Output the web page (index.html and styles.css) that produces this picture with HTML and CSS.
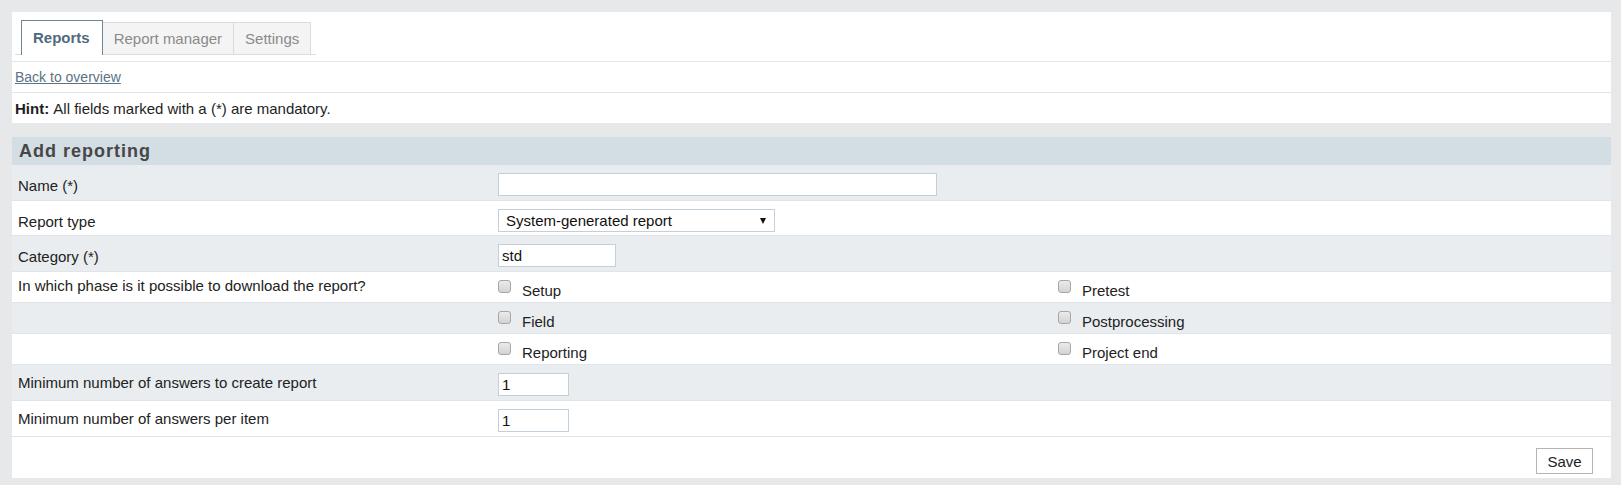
FILE: index.html
```html
<!DOCTYPE html>
<html lang="en">
<head>
<meta charset="utf-8">
<title>Add reporting</title>
<link rel="stylesheet" href="styles.css">
</head>
<body>
<div class="page">
  <section class="panel panel-top">
    <div class="tabbar">
      <ul class="tabs">
        <li class="tab tab-active">Reports</li>
        <li class="tab">Report manager</li>
        <li class="tab">Settings</li>
      </ul>
    </div>
    <div class="info-row info-row-sep"><a href="#" class="back-link">Back to overview</a></div>
    <div class="info-row hint"><b>Hint:</b>&nbsp;All fields marked with a (*) are mandatory.</div>
  </section>

  <section class="panel panel-form">
    <h2 class="form-title">Add reporting</h2>

    <div class="form-row row-gray h36">
      <div class="cell cell-label">Name (*)</div>
      <div class="cell"><input class="field field-name" type="text"></div>
      <div class="cell"></div>
    </div>

    <div class="form-row h35">
      <div class="cell cell-label">Report type</div>
      <div class="cell">
        <div class="select-wrap">
          <select class="field-select"><option>System-generated report</option></select>
          <span class="select-arrow"></span>
        </div>
      </div>
      <div class="cell"></div>
    </div>

    <div class="form-row row-gray h36">
      <div class="cell cell-label">Category (*)</div>
      <div class="cell"><input class="field field-cat" type="text" value="std"></div>
      <div class="cell"></div>
    </div>

    <div class="form-row h31">
      <div class="cell cell-label label-phase">In which phase is it possible to download the report?</div>
      <div class="cell cell-check"><input type="checkbox" class="check"><span class="check-text">Setup</span></div>
      <div class="cell cell-check"><input type="checkbox" class="check"><span class="check-text">Pretest</span></div>
    </div>

    <div class="form-row row-gray h31">
      <div class="cell cell-label"></div>
      <div class="cell cell-check"><input type="checkbox" class="check"><span class="check-text">Field</span></div>
      <div class="cell cell-check"><input type="checkbox" class="check"><span class="check-text">Postprocessing</span></div>
    </div>

    <div class="form-row h31">
      <div class="cell cell-label"></div>
      <div class="cell cell-check"><input type="checkbox" class="check"><span class="check-text">Reporting</span></div>
      <div class="cell cell-check"><input type="checkbox" class="check"><span class="check-text">Project end</span></div>
    </div>

    <div class="form-row row-gray h36">
      <div class="cell cell-label label-compact">Minimum number of answers to create report</div>
      <div class="cell"><input class="field field-num" type="text" value="1"></div>
      <div class="cell"></div>
    </div>

    <div class="form-row h36">
      <div class="cell cell-label label-compact">Minimum number of answers per item</div>
      <div class="cell"><input class="field field-num" type="text" value="1"></div>
      <div class="cell"></div>
    </div>

    <div class="form-footer">
      <button class="btn-save" type="button">Save</button>
    </div>
  </section>
</div>
</body>
</html>
```

FILE: styles.css
```css
* { box-sizing: border-box; }

html, body {
  margin: 0;
  padding: 0;
}

body {
  background: #e6e8ea;
  font-family: "Liberation Sans", Arial, sans-serif;
  font-size: 15px;
  color: #222;
  height: 485px;
  overflow: hidden;
}

.page {
  padding: 12px 10px 0 12px;
}

.panel {
  background: #fff;
}

/* ---------- top panel ---------- */
.tabbar {
  padding: 8px 0 6px 3px;
  border-bottom: 1px solid #e2e6e9;
}

.tabs {
  list-style: none;
  margin: 0;
  padding: 0 5px 0 6px;
  display: inline-flex;
  align-items: flex-end;
  border-bottom: 1px solid #dcdcdc;
}

.tab {
  height: 32px;
  line-height: 31px;
  padding: 0 11px;
  background: #f4f4f4;
  color: #8a8a8a;
  border-top: 1px solid #dcdcdc;
  border-right: 1px solid #dcdcdc;
  font-size: 15px;
}

.tab-active {
  height: 35px;
  line-height: 33px;
  padding: 0 12px 0 11px;
  margin-bottom: -1px;
  background: #fff;
  color: #4f6a7d;
  font-weight: bold;
  font-size: 15px;
  border: 1px solid #6a8698;
  border-bottom: none;
}

.info-row {
  height: 30px;
  display: flex;
  align-items: center;
  padding-left: 3px;
}

.info-row-sep {
  height: 31px;
  border-bottom: 1px solid #e2e6e9;
}

.back-link {
  color: #5b7385;
  font-size: 14px;
  text-decoration: underline;
}

.hint {
  font-size: 15px;
  color: #1e1e1e;
}

/* ---------- form panel ---------- */
.panel-form {
  margin-top: 14px;
}

.form-title {
  margin: 0;
  height: 28px;
  line-height: 28px;
  padding-left: 7px;
  background: #d3dde4;
  color: #474747;
  font-size: 18px;
  font-weight: bold;
  letter-spacing: 1px;
}

.form-row {
  display: grid;
  grid-template-columns: 480px 560px 1fr;
  align-items: start;
  border-bottom: 1px solid #dfe5ea;
  background: #fff;
}

.row-gray { background: #e9edf0; }

.h36 { height: 36px; }
.h35 { height: 35px; }
.h31 { height: 31px; }

.cell {
  padding: 8px 6px 0;
}

.cell-label {
  padding-top: 12px;
  line-height: 17px;
  font-size: 15px;
}

.label-compact { padding-top: 9px; }
.label-phase { padding-top: 5px; }

.field {
  display: block;
  height: 23px;
  margin: 0;
  padding: 0 3px;
  border: 1px solid #c4d0d9;
  background: #fff;
  font-family: "Liberation Sans", Arial, sans-serif;
  font-size: 15px;
  color: #111;
  outline: none;
}

.field-name { width: 439px; }
.field-cat { width: 118px; }
.field-num { width: 71px; }

.select-wrap {
  position: relative;
  width: 277px;
  height: 23px;
}

.field-select {
  appearance: none;
  -webkit-appearance: none;
  display: block;
  width: 100%;
  height: 100%;
  margin: 0;
  padding: 0 0 0 7px;
  border: 1px solid #c4d0d9;
  border-radius: 0;
  background: #fff;
  font-family: "Liberation Sans", Arial, sans-serif;
  font-size: 15px;
  color: #111;
  outline: none;
}

.select-arrow {
  position: absolute;
  right: 9px;
  top: 9px;
  width: 0;
  height: 0;
  border-left: 3.5px solid transparent;
  border-right: 3.5px solid transparent;
  border-top: 6px solid #111;
  pointer-events: none;
}

.cell-check {
  display: flex;
  align-items: flex-start;
}

.check {
  appearance: none;
  -webkit-appearance: none;
  width: 13px;
  height: 13px;
  margin: 0;
  border: 1px solid #a7a7a7;
  border-radius: 3px;
  background: linear-gradient(#ebebeb, #d3d3d3);
  flex: none;
}

.check-text {
  margin-left: 11px;
  margin-top: 2px;
  line-height: 17px;
  font-size: 15px;
}

.form-footer {
  height: 41px;
  display: flex;
  justify-content: flex-end;
  align-items: flex-start;
  padding: 11px 18px 0 0;
}

.btn-save {
  width: 57px;
  height: 26px;
  margin: 0;
  padding: 0;
  border: 1px solid #b4b4b4;
  border-radius: 0;
  background: #fff;
  font-family: "Liberation Sans", Arial, sans-serif;
  font-size: 15px;
  color: #222;
}
```
